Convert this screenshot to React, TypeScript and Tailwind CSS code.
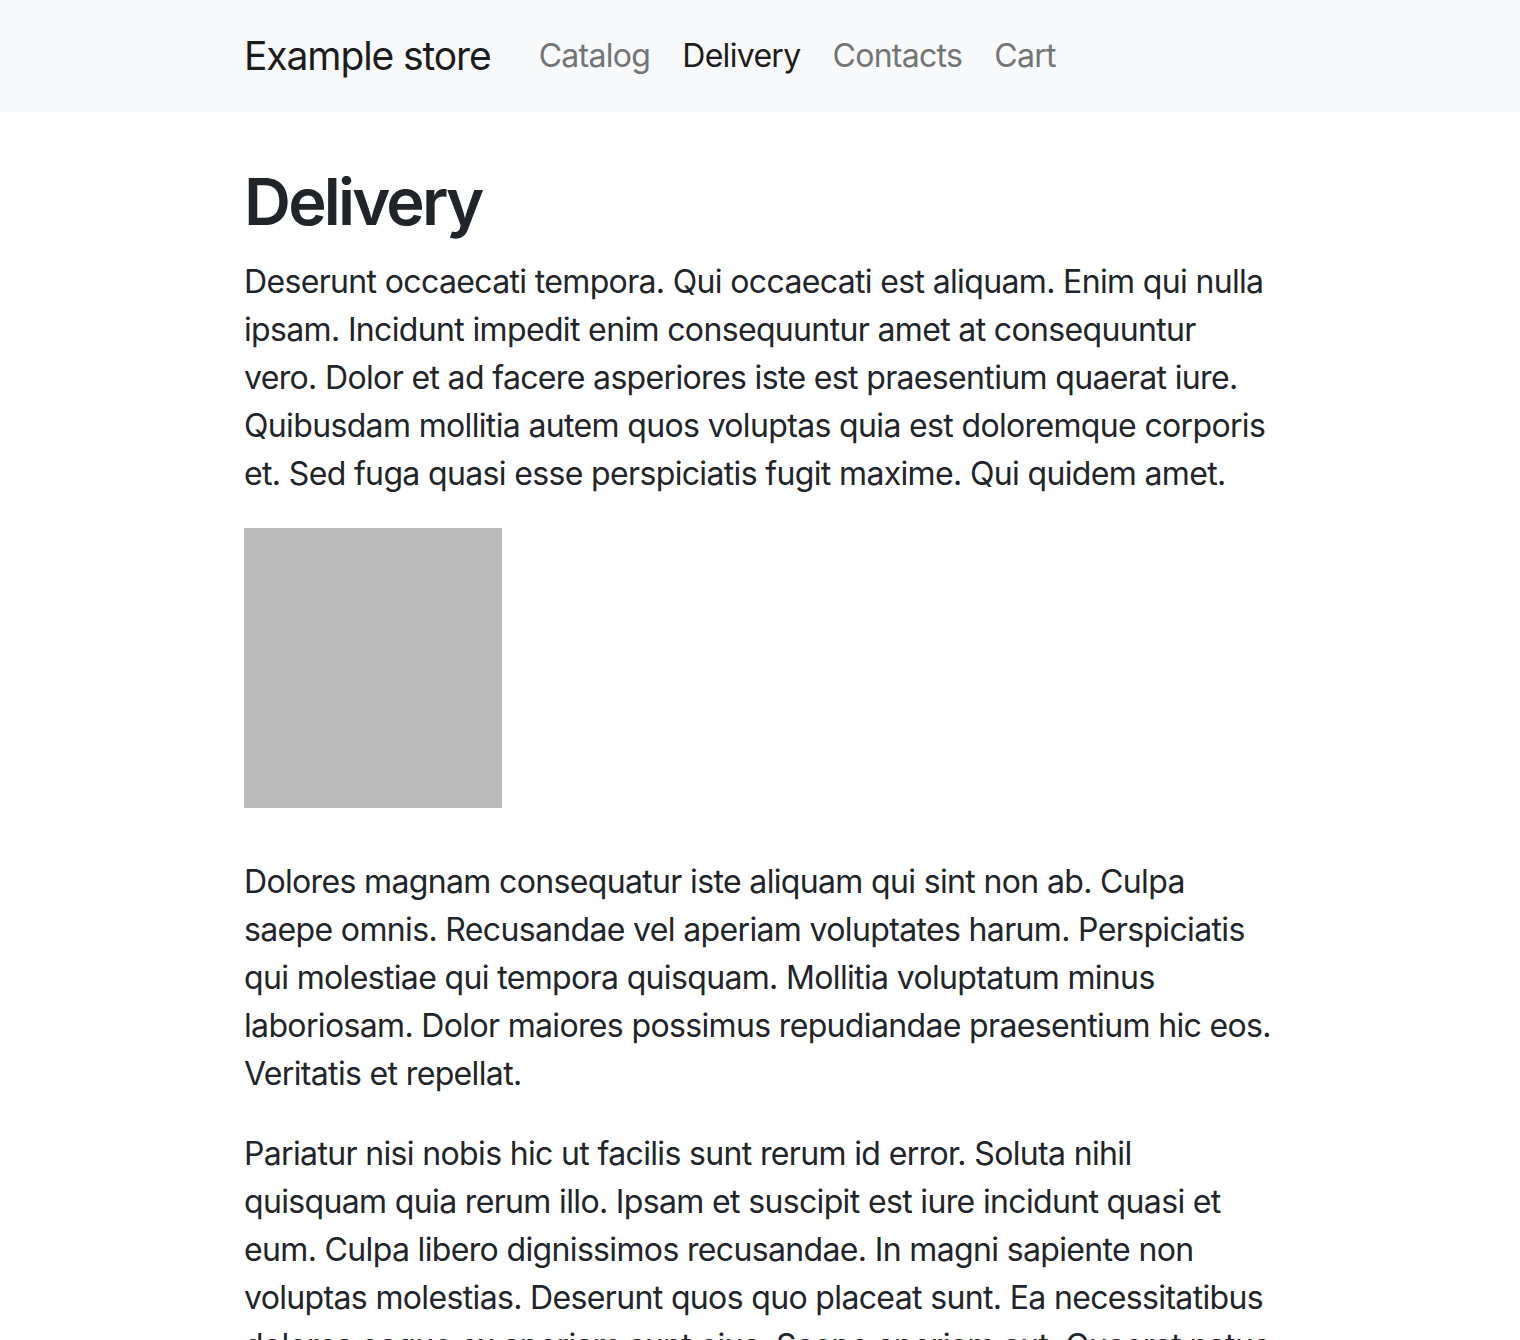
import React from "react";

const intro = [
  "Deserunt occaecati tempora. Qui occaecati est aliquam. Enim qui nulla",
  "ipsam. Incidunt impedit enim consequuntur amet at consequuntur",
  "vero. Dolor et ad facere asperiores iste est praesentium quaerat iure.",
  "Quibusdam mollitia autem quos voluptas quia est doloremque corporis",
  "et. Sed fuga quasi esse perspiciatis fugit maxime. Qui quidem amet.",
];

const second = [
  "Dolores magnam consequatur iste aliquam qui sint non ab. Culpa",
  "saepe omnis. Recusandae vel aperiam voluptates harum. Perspiciatis",
  "qui molestiae qui tempora quisquam. Mollitia voluptatum minus",
  "laboriosam. Dolor maiores possimus repudiandae praesentium hic eos.",
  "Veritatis et repellat.",
];

const third = [
  "Pariatur nisi nobis hic ut facilis sunt rerum id error. Soluta nihil",
  "quisquam quia rerum illo. Ipsam et suscipit est iure incidunt quasi et",
  "eum. Culpa libero dignissimos recusandae. In magni sapiente non",
  "voluptas molestias. Deserunt quos quo placeat sunt. Ea necessitatibus",
  "dolores eaque ex aperiam sunt eius. Saepe aperiam aut. Quaerat natus",
];

function Para({ lines, className = "" }: { lines: string[]; className?: string }) {
  return (
    <p className={"text-[32px] leading-[48px] tracking-[-0.65px] text-[#212529] " + className}>
      {lines.map((l, i) => (
        <span key={i} className="block whitespace-nowrap">
          {l}
        </span>
      ))}
    </p>
  );
}

export default function App() {
  return (
    <div className="min-h-screen bg-white font-['Inter',sans-serif] overflow-hidden h-[1340px]">
      <nav className="h-[112px] bg-[#f8f9fa]">
        <div className="pl-[244px] h-full flex items-center">
          <a className="text-[39px] leading-[60px] text-[#1c1c1d] mr-[32px] tracking-[-1.1px]">Example store</a>
          <ul className="flex">
            {["Catalog", "Delivery", "Contacts", "Cart"].map((n) => (
              <li key={n}>
                <a
                  className={
                    "block px-[16px] text-[32px] leading-[48px] tracking-[-0.7px] " +
                    (n === "Delivery" ? "text-[#1c1c1d]" : "text-[#737475]")
                  }
                >
                  {n}
                </a>
              </li>
            ))}
          </ul>
        </div>
      </nav>

      <main className="pl-[244px] pt-[50px]">
        <h1 className="text-[65px] leading-[80px] font-semibold text-[#212529] mb-[16px] tracking-[-2.8px]">Delivery</h1>
        <Para lines={intro} className="mb-[30px]" />
        <div className="w-[258px] h-[280px] bg-[#b9b9b9] mb-[50px]" />
        <Para lines={second} className="mb-[32px]" />
        <Para lines={third} />
      </main>
    </div>
  );
}
